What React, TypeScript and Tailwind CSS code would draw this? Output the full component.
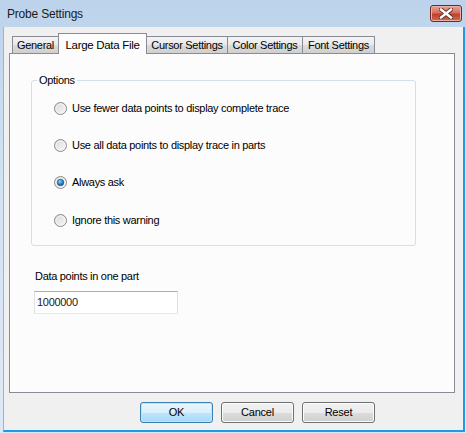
import React from 'react';

const font = { fontFamily: '"Liberation Sans", Arial, sans-serif' };

const tabs = [
  { label: 'General', w: 'w-[47px]' },
  { label: 'Large Data File', w: 'w-[89px]', active: true },
  { label: 'Cursor Settings', w: 'w-[82px]' },
  { label: 'Color Settings', w: 'w-[76px]' },
  { label: 'Font Settings', w: 'w-[73px]' },
];

const options = [
  'Use fewer data points to display complete trace',
  'Use all data points to display trace in parts',
  'Always ask',
  'Ignore this warning',
];

function Radio({ checked }: { checked?: boolean }) {
  return (
    <svg width="13" height="13" viewBox="0 0 13 13" className="shrink-0">
      <defs>
        <linearGradient id="rg" x1="0" y1="0" x2="1" y2="1">
          <stop offset="0" stopColor="#d6d6d6" />
          <stop offset="1" stopColor="#fbfbfb" />
        </linearGradient>
        <radialGradient id="dot" cx="0.4" cy="0.35" r="0.7">
          <stop offset="0" stopColor="#8fd5f5" />
          <stop offset="0.5" stopColor="#2f8fcf" />
          <stop offset="1" stopColor="#134a80" />
        </radialGradient>
      </defs>
      <circle cx="6.5" cy="6.5" r="6" fill="url(#rg)" stroke="#8a8a8a" strokeWidth="1" />
      <circle cx="6.5" cy="6.5" r="4.5" fill="none" stroke="#f4f4f4" strokeWidth="1" />
      {checked && <circle cx="6.5" cy="6.5" r="3.3" fill="url(#dot)" stroke="#1c5180" strokeWidth="0.6" />}
    </svg>
  );
}

function Button({ label, primary }: { label: string; primary?: boolean }) {
  return (
    <div
      className={`w-[73px] h-[21px] rounded-[3px] border flex items-center justify-center text-[11px] tracking-[-0.2px] text-black ${
        primary
          ? 'border-[#3c7fb1] bg-[linear-gradient(#eaf6fd_0%,#d9f0fc_50%,#bee6fd_50%,#a7d9f5_100%)] shadow-[inset_0_0_0_1px_#bfe5f8]'
          : 'border-[#707070] bg-[linear-gradient(#f2f2f2_0%,#ebebeb_50%,#dddddd_50%,#cfcfcf_100%)] shadow-[inset_0_0_0_1px_#fcfcfc]'
      }`}
    >
      {label}
    </div>
  );
}

export default function App() {
  return (
    <div style={font} className="w-[466px] h-[433px] flex flex-col bg-[linear-gradient(#bcd3eb,#d1e2f3_40%,#dde9f6)] select-none">
      {/* Title bar */}
      <div className="h-[27px] flex items-start justify-between shrink-0">
        <div className="pl-[7px] pt-[6px] text-[12px] tracking-[-0.2px] leading-[16px] text-[#1b1b1b]">
          Probe Settings
        </div>
        <div className="mt-[5px] mr-[4px] w-[32px] h-[17px] rounded-[3px] border border-[#6a2a25] bg-[linear-gradient(#e8a293_0%,#d7705e_45%,#c0412d_55%,#cf6a4e_100%)] flex items-center justify-center shadow-[inset_0_0_0_1px_#eab1a4]">
          <svg width="14" height="11" viewBox="0 0 14 11">
            <path d="M2 1.5 L12 9.5 M12 1.5 L2 9.5" stroke="#5a2a26" strokeWidth="4.2" strokeLinecap="square" />
            <path d="M2 1.5 L12 9.5 M12 1.5 L2 9.5" stroke="#ffffff" strokeWidth="2.4" strokeLinecap="square" />
          </svg>
        </div>
      </div>

      {/* Client area */}
      <div className="ml-[3px] mr-[1px] mb-[1px] flex-1 flex flex-col bg-[#f0f0f0] border-l border-l-[#9fb2c8] border-r-2 border-r-[#1f9be6] border-b-2 border-b-[#1f9be6]">
        {/* Tabs */}
        <div className="h-[26px] pl-[8px] flex items-end shrink-0 tracking-[-0.3px]">
          {tabs.map((t) =>
            t.active ? (
              <div
                key={t.label}
                className={`${t.w} -ml-px h-[21px] -mb-px relative z-10 border border-b-0 border-[#898c95] bg-[#fcfcfc] text-[11.5px] text-black flex items-start justify-center pt-[3px]`}
              >
                {t.label}
              </div>
            ) : (
              <div
                key={t.label}
                className={`${t.w} -ml-px first:ml-0 h-[17px] border border-b-0 border-[#898c95] bg-[linear-gradient(#f3f3f3,#e9e9e9_50%,#dcdcdc_51%,#cfcfcf)] text-[11px] text-black flex items-center justify-center pt-px`}
              >
                {t.label}
              </div>
            )
          )}
        </div>

        {/* Panel */}
        <div className="ml-[5px] w-[446px] h-[340px] border border-[#898c95] bg-[#fcfcfc] shrink-0 text-[11px] tracking-[-0.3px] text-black">
          <div className="ml-[21px] mt-[26px] w-[385px] h-[166px] border border-[#d5dfe5] rounded-[3px] relative">
            <div className="absolute left-[5px] -top-[7px] px-[2px] bg-[#fcfcfc] leading-[13px]">Options</div>
            <div className="pl-[22px] pt-[19px] flex flex-col">
              {options.map((o, i) => (
                <div key={o} className={`h-[16px] flex items-center gap-[5px] ${i === 0 ? '' : i === 3 ? 'mt-[22px]' : 'mt-[21px]'}`}>
                  <Radio checked={i === 2} />
                  <span className="leading-[13px]">{o}</span>
                </div>
              ))}
            </div>
          </div>

          <div className="ml-[25px] mt-[24px] leading-[13px]">Data points in one part</div>
          <div className="ml-[24px] mt-[8px] w-[144px] h-[23px] border border-[#dbdfe6] border-t-[#abadb3] border-b-[#e3e9ef] bg-white flex items-center pl-[2px] text-[#1a1a1a]">
            1000000
          </div>
        </div>

        {/* Buttons */}
        <div className="mt-[9px] pl-[136px] flex gap-[8px]">
          <Button label="OK" primary />
          <Button label="Cancel" />
          <Button label="Reset" />
        </div>
      </div>
    </div>
  );
}
